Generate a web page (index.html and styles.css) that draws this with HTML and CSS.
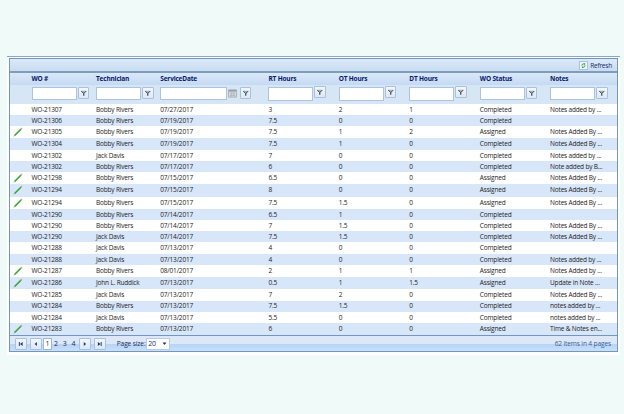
FILE: index.html
```html
<!DOCTYPE html>
<html lang="en">
<head>
<meta charset="utf-8">
<title>Work Orders</title>
<link rel="stylesheet" href="styles.css">
</head>
<body>
<svg class="defs" aria-hidden="true">
  <symbol id="funnel" viewBox="0 0 10 10"><path d="M2 2.5h6L6 5.2V8H4.6V5.2z" fill="#a9b1bb"/><path d="M2.4 3L4.9 5.6V7.8M7.6 3L5 5.6" fill="none" stroke="#3a4552" stroke-width="1"/></symbol>
  <symbol id="pencil" viewBox="0 0 10 10"><path d="M1.3 8.7L8 2" stroke="#38b138" stroke-width="1.5"/><path d="M2 8.6L8.2 2.5" stroke="#287f28" stroke-width=".4"/><path d="M7.8 2.2L9 1" stroke="#d2a095" stroke-width="1.4"/><path d="M.5 9.5l1-1" stroke="#d9b889" stroke-width="1"/></symbol>
</svg>
<main class="panel">
  <section class="grid">
    <div class="toolbar">
      <span class="refresh-icon"><svg viewBox="0 0 8 8"><path d="M1.5 4.2C1.3 2.4 2.6 1.3 4.4 1.6M6.5 3.8C6.7 5.6 5.4 6.7 3.6 6.4" fill="none" stroke="#279432" stroke-width="1.5"/><path d="M4 0l3 .6L5.5 3.4zM4 8l-3-.6L2.5 4.6z" fill="#279432"/></svg></span>
      <span>Refresh</span>
    </div>
    <div class="cols header">
      <span></span><span>WO #</span><span>Technician</span><span>ServiceDate</span><span>RT Hours</span><span>OT Hours</span><span>DT Hours</span><span>WO Status</span><span>Notes</span>
    </div>
    <div class="cols filters">
      <span></span>
      <div class="filter"><i class="field"></i><b class="btn"><svg><use href="#funnel"/></svg></b></div>
      <div class="filter"><i class="field"></i><b class="btn"><svg><use href="#funnel"/></svg></b></div>
      <div class="filter date"><i class="field"></i><svg class="calendar" viewBox="0 0 10 9"><path d="M.5.5h9v8h-9z" fill="#d9dde2" stroke="#a3abb5"/><path d="M1 1.5h8" stroke="#8c949e" stroke-width="1.5"/><path d="M2 4h6M2 6.5h6M3.5 3v5M6.5 3v5" stroke="#a8aeb6" stroke-width=".8"/></svg><b class="btn"><svg><use href="#funnel"/></svg></b></div>
      <div class="filter tall"><i class="field"></i><b class="btn"><svg><use href="#funnel"/></svg></b></div>
      <div class="filter tall"><i class="field"></i><b class="btn"><svg><use href="#funnel"/></svg></b></div>
      <div class="filter tall"><i class="field"></i><b class="btn"><svg><use href="#funnel"/></svg></b></div>
      <div class="filter"><i class="field"></i><b class="btn"><svg><use href="#funnel"/></svg></b></div>
      <div class="filter"><i class="field"></i><b class="btn"><svg><use href="#funnel"/></svg></b></div>
    </div>
    <div class="rows" id="rows"></div>
    <div class="pager">
      <b class="btn nav"><svg viewBox="0 0 10 10"><path d="M3 3h1v4H3zM7 3v4L4.2 5z" fill="#1d3971"/></svg></b>
      <b class="btn nav prev"><svg viewBox="0 0 10 10"><path d="M6.2 3v4L3.8 5z" fill="#1d3971"/></svg></b>
      <span class="page current">1</span><span class="page">2</span><span class="page">3</span><span class="page">4</span>
      <b class="btn nav next"><svg viewBox="0 0 10 10"><path d="M4 3v4l2.4-2z" fill="#1d3971"/></svg></b>
      <b class="btn nav last"><svg viewBox="0 0 10 10"><path d="M6 3h1v4H6zM3 3v4l2.8-2z" fill="#1d3971"/></svg></b>
      <span class="size-label">Page size:</span>
      <span class="select">20<svg viewBox="0 0 5 4"><path d="M.5.5h4L2.5 3z" fill="#1d3971"/></svg></span>
      <span class="total">62 items in 4 pages</span>
    </div>
  </section>
</main>
<script src="rows.js"></script>
</body>
</html>
```
FILE: styles.css
```css
* { box-sizing: border-box; }
body {
  margin: 0;
  padding: 56px 4px 0 7px;
  height: 414px;
  overflow: hidden;
  background: #f0faf9;
  font: 6.5px/10px "Open Sans", "Noto Sans", sans-serif;
  letter-spacing: -0.18px;
  color: #1c1c1c;
}
.defs { position: absolute; width: 0; height: 0; }
svg { display: block; }
.panel {
  height: 299px;
  background: #fff;
  border-top: 1px solid #86aac4;
  padding: 1px 2px 0;
}
.grid {
  width: 609px;
  height: 294px;
  border: 1px solid #7396b9;
  display: flex;
  flex-direction: column;
}
.toolbar {
  height: 14px;
  flex: none;
  display: flex;
  align-items: center;
  justify-content: flex-end;
  gap: 2px;
  padding: 1px 5px 0 0;
  background: linear-gradient(#dce9f7, #c9dcf1);
  border-bottom: 2px solid #7c9dbe;
  color: #172e61;
  letter-spacing: -0.2px;
}
.refresh-icon {
  width: 9px;
  height: 9px;
  padding: 1px;
  border: 1px solid #abc3df;
  background: #edf5fc;
}
.cols {
  display: grid;
  flex: none;
  grid-template-columns: 21.5px 64.5px 64.3px 108.2px 70.2px 70.6px 70.6px 70.2px 1fr;
  align-items: center;
  white-space: nowrap;
}
.header {
  height: 12px;
  background: linear-gradient(#dbe8f7, #c4daf3);
  color: #07196a;
  font-weight: 700;
}
.filters {
  height: 18.7px;
  background: #d7e6f4;
  align-items: start;
  padding-top: 2px;
}
.filter { display: flex; gap: 1px; }
.field {
  width: 45px;
  height: 13px;
  flex: none;
  background: #fff;
  border: 1px solid #abc4e2;
}
.btn {
  width: 11.5px;
  height: 12px;
  flex: none;
  border: 1px solid #a9c0df;
  border-radius: 1px;
  background: linear-gradient(#f2f7fd, #dce8f7);
}
.btn svg { width: 9.5px; height: 10px; }
.date .field { width: 66.5px; }
.calendar { width: 9px; height: 9px; margin: 2px 2px 0 0; }
.tall .field { height: 14px; }
.tall .btn { margin-top: -1px; }
.rows { flex: none; }
.row { height: 11.25px; padding-top: 0.5px; }
.row.editable { height: 12.2px; padding-top: 0; }
.row:nth-child(even) { background: #d8e6f9; }
.pencil { width: 10px; height: 10px; margin-left: 3px; }
.pager {
  flex: 1;
  display: flex;
  align-items: center;
  padding: 0 6px 0 5px;
  border-top: 1px solid #7396c5;
  background: linear-gradient(#dce8f8 0 50%, #b5d3f5 51%, #c8dff9);
  color: #172e61;
}
.prev { margin-left: 3.5px; }
.page { width: 8.7px; text-align: center; font-size: 7px; }
.current {
  height: 12px;
  margin-left: 1.5px;
  border: 1px solid #9db6d9;
  background: #fff;
}
.next { margin-left: 1.5px; }
.last { margin-left: 3.5px; }
.size-label { margin-left: 11px; width: 29.5px; white-space: nowrap; font-size: 6.6px; letter-spacing: -0.12px; }
.select {
  display: flex;
  align-items: center;
  justify-content: space-between;
  width: 24px;
  height: 12px;
  padding: 0 2px 0 1px;
  border: 1px solid #b7cce8;
  background: #fff;
  font-size: 7px;
}
.select svg { width: 5px; height: 4px; }
.total { margin-left: auto; padding-top: 1px; color: #3c5d96; font-size: 6.6px; letter-spacing: -0.14px; }
```
FILE: rows.js
```js
// edit flag, order, technician, date, RT, OT, DT, status, notes
const data = [
  [0, '21307', 'Bobby Rivers', '07/27/2017', '3', '2', '1', 'Completed', 'Notes added by ...'],
  [0, '21306', 'Bobby Rivers', '07/19/2017', '7.5', '0', '0', 'Completed', ''],
  [1, '21305', 'Bobby Rivers', '07/19/2017', '7.5', '1', '2', 'Assigned', 'Notes Added By ...'],
  [0, '21304', 'Bobby Rivers', '07/19/2017', '7.5', '1', '0', 'Completed', 'Notes Added By ...'],
  [0, '21302', 'Jack Davis', '07/17/2017', '7', '0', '0', 'Completed', 'Notes added by ...'],
  [0, '21302', 'Bobby Rivers', '07/17/2017', '6', '0', '0', 'Completed', 'Note added by B...'],
  [1, '21298', 'Bobby Rivers', '07/15/2017', '6.5', '0', '0', 'Assigned', 'Notes Added By ...'],
  [1, '21294', 'Bobby Rivers', '07/15/2017', '8', '0', '0', 'Assigned', 'Notes Added By ...'],
  [1, '21294', 'Bobby Rivers', '07/15/2017', '7.5', '1.5', '0', 'Assigned', 'Notes Added By ...'],
  [0, '21290', 'Bobby Rivers', '07/14/2017', '6.5', '1', '0', 'Completed', ''],
  [0, '21290', 'Bobby Rivers', '07/14/2017', '7', '1.5', '0', 'Completed', 'Notes Added By ...'],
  [0, '21290', 'Jack Davis', '07/14/2017', '7.5', '1.5', '0', 'Completed', 'Notes Added By ...'],
  [0, '21288', 'Jack Davis', '07/13/2017', '4', '0', '0', 'Completed', ''],
  [0, '21288', 'Jack Davis', '07/13/2017', '4', '0', '0', 'Completed', 'Notes added by ...'],
  [1, '21287', 'Bobby Rivers', '08/01/2017', '2', '1', '1', 'Assigned', 'Notes Added by ...'],
  [1, '21286', 'John L. Ruddick', '07/13/2017', '0.5', '1', '1.5', 'Assigned', 'Update in Note ...'],
  [0, '21285', 'Jack Davis', '07/13/2017', '7', '2', '0', 'Completed', 'Notes Added By ...'],
  [0, '21284', 'Bobby Rivers', '07/13/2017', '7.5', '1.5', '0', 'Completed', 'notes added by ...'],
  [0, '21284', 'Jack Davis', '07/13/2017', '5.5', '0', '0', 'Completed', 'notes added by ...'],
  [1, '21283', 'Bobby Rivers', '07/13/2017', '6', '0', '0', 'Assigned', 'Time & Notes en...']
];
document.getElementById('rows').innerHTML = data.map(([edit, order, ...rest]) => {
  const icon = edit ? '<svg class="pencil"><use href="#pencil"/></svg>' : '';
  const cells = ['WO-' + order, ...rest].map(t => `<span>${t.replace('&', '&amp;')}</span>`).join('');
  return `<div class="cols row${edit ? ' editable' : ''}"><span>${icon}</span>${cells}</div>`;
}).join('');
```
